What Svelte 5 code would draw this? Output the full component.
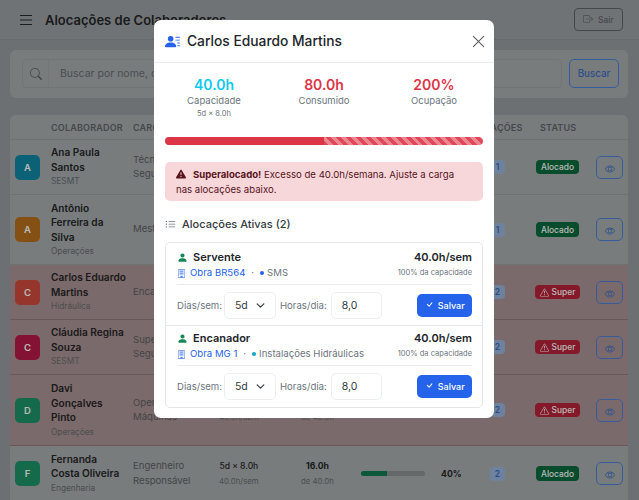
<script>
  const rows = [
    { initial: 'A', color: '#1088a5', name: 'Ana Paula\nSantos', dept: 'SESMT', cargo: 'Técnico de Segurança', used: '40.0h', pct: 100, alloc: 1, over: false, h: 55 },
    { initial: 'A', color: '#b8701c', name: 'Antônio\nFerreira da\nSilva', dept: 'Operações', cargo: 'Mestre de Obras', used: '40.0h', pct: 100, alloc: 1, over: false, h: 70 },
    { initial: 'C', color: '#d04a3c', name: 'Carlos Eduardo\nMartins', dept: 'Hidráulica', cargo: 'Encanador', used: '80.0h', pct: 200, alloc: 2, over: true, h: 55 },
    { initial: 'C', color: '#b81a48', name: 'Cláudia Regina\nSouza', dept: 'SESMT', cargo: 'Supervisor de Segurança', used: '60.0h', pct: 150, alloc: 2, over: true, h: 55 },
    { initial: 'D', color: '#1e9468', name: 'Davi\nGonçalves\nPinto', dept: 'Operações', cargo: 'Operador de Máquinas', used: '60.0h', pct: 150, alloc: 2, over: true, h: 71 },
    { initial: 'F', color: '#1e9468', name: 'Fernanda\nCosta Oliveira', dept: 'Engenharia', cargo: 'Engenheiro Responsável', used: '16.0h', pct: 40, alloc: 2, over: false, h: 56 }
  ];

  const allocations = [
    { role: 'Servente', obra: 'Obra BR564', sector: 'SMS', dot: '#2563eb' },
    { role: 'Encanador', obra: 'Obra MG 1', sector: 'Instalações Hidráulicas', dot: '#0ea5c6' }
  ];

  const icons = {
    list: 'M2.5 12a.5.5 0 0 1 .5-.5h10a.5.5 0 0 1 0 1H3a.5.5 0 0 1-.5-.5m0-4a.5.5 0 0 1 .5-.5h10a.5.5 0 0 1 0 1H3a.5.5 0 0 1-.5-.5m0-4a.5.5 0 0 1 .5-.5h10a.5.5 0 0 1 0 1H3a.5.5 0 0 1-.5-.5',
    exit: 'M10 12.5a.5.5 0 0 1-.5.5h-8a.5.5 0 0 1-.5-.5v-9a.5.5 0 0 1 .5-.5h8a.5.5 0 0 1 .5.5v2a.5.5 0 0 0 1 0v-2A1.5 1.5 0 0 0 9.5 2h-8A1.5 1.5 0 0 0 0 3.5v9A1.5 1.5 0 0 0 1.5 14h8a1.5 1.5 0 0 0 1.5-1.5v-2a.5.5 0 0 0-1 0zM15.854 8.354a.5.5 0 0 0 0-.708l-3-3a.5.5 0 0 0-.708.708L14.293 7.5H5.5a.5.5 0 0 0 0 1h8.793l-2.147 2.146a.5.5 0 0 0 .708.708z',
    search: 'M11.742 10.344a6.5 6.5 0 1 0-1.397 1.398h-.001q.044.06.098.115l3.85 3.85a1 1 0 0 0 1.415-1.414l-3.85-3.85a1 1 0 0 0-.115-.1zM12 6.5a5.5 5.5 0 1 1-11 0 5.5 5.5 0 0 1 11 0',
    eye: 'M16 8s-3-5.5-8-5.5S0 8 0 8s3 5.5 8 5.5S16 8 16 8M1.173 8a13 13 0 0 1 1.66-2.043C4.12 4.668 5.88 3.5 8 3.5s3.879 1.168 5.168 2.457A13 13 0 0 1 14.828 8q-.086.13-.195.288c-.335.48-.83 1.12-1.465 1.755C11.879 11.332 10.119 12.5 8 12.5s-3.879-1.168-5.168-2.457A13 13 0 0 1 1.172 8zM8 5.5a2.5 2.5 0 1 0 0 5 2.5 2.5 0 0 0 0-5M4.5 8a3.5 3.5 0 1 1 7 0 3.5 3.5 0 0 1-7 0',
    warn: 'M7.938 2.016A.13.13 0 0 1 8.002 2a.13.13 0 0 1 .063.016.15.15 0 0 1 .054.057l6.857 11.667c.036.06.035.124.002.183a.2.2 0 0 1-.054.06.1.1 0 0 1-.066.017H1.146a.1.1 0 0 1-.066-.017.2.2 0 0 1-.054-.06.18.18 0 0 1 .002-.183L7.884 2.073a.15.15 0 0 1 .054-.057m1.044-.45a1.13 1.13 0 0 0-1.96 0L.165 13.233c-.457.778.091 1.767.98 1.767h13.713c.889 0 1.438-.99.98-1.767zM7.002 12a1 1 0 1 1 2 0 1 1 0 0 1-2 0M7.1 5.995a.905.905 0 1 1 1.8 0l-.35 3.507a.552.552 0 0 1-1.1 0z',
    warnFill: 'M8.982 1.566a1.13 1.13 0 0 0-1.96 0L.165 13.233c-.457.778.091 1.767.98 1.767h13.713c.889 0 1.438-.99.98-1.767zM8 5c.535 0 .954.462.9.995l-.35 3.507a.552.552 0 0 1-1.1 0L7.1 5.995A.905.905 0 0 1 8 5m.002 6a1 1 0 1 1 0 2 1 1 0 0 1 0-2',
    personLines: 'M6 8a3 3 0 1 0 0-6 3 3 0 0 0 0 6m-5 6s-1 0-1-1 1-4 6-4 6 3 6 4-1 1-1 1zM11 3.5a.5.5 0 0 1 .5-.5h4a.5.5 0 0 1 0 1h-4a.5.5 0 0 1-.5-.5m.5 2.5a.5.5 0 0 0 0 1h4a.5.5 0 0 0 0-1zm2 3a.5.5 0 0 0 0 1h2a.5.5 0 0 0 0-1zm0 3a.5.5 0 0 0 0 1h2a.5.5 0 0 0 0-1z',
    close: 'M2.146 2.854a.5.5 0 1 1 .708-.708L8 7.293l5.146-5.147a.5.5 0 0 1 .708.708L8.707 8l5.147 5.146a.5.5 0 0 1-.708.708L8 8.707l-5.146 5.147a.5.5 0 0 1-.708-.708L7.293 8z',
    listUl: 'M5 11.5a.5.5 0 0 1 .5-.5h9a.5.5 0 0 1 0 1h-9a.5.5 0 0 1-.5-.5m0-4a.5.5 0 0 1 .5-.5h9a.5.5 0 0 1 0 1h-9a.5.5 0 0 1-.5-.5m0-4a.5.5 0 0 1 .5-.5h9a.5.5 0 0 1 0 1h-9a.5.5 0 0 1-.5-.5m-3 1a1 1 0 1 0 0-2 1 1 0 0 0 0 2m0 4a1 1 0 1 0 0-2 1 1 0 0 0 0 2m0 4a1 1 0 1 0 0-2 1 1 0 0 0 0 2',
    person: 'M3 14s-1 0-1-1 1-4 6-4 6 3 6 4-1 1-1 1zm5-6a3 3 0 1 0 0-6 3 3 0 0 0 0 6',
    building: 'M3 0h10a1 1 0 0 1 1 1v14a1 1 0 0 1-1 1H3a1 1 0 0 1-1-1V1a1 1 0 0 1 1-1m0 1.300v13.400h3V12h4v2.700h3V1.300zm1.500 1.500h7v2h-7zm0 3.500h7v2h-7zm0 3h7v.8h-7z',
    check: 'M10.97 4.97a.75.75 0 0 1 1.07 1.05l-3.99 4.99a.75.75 0 0 1-1.08.02L4.324 8.384a.75.75 0 1 1 1.06-1.06l2.094 2.093 3.473-4.425z'
  };
</script>

{#snippet icon(d, size)}
  <svg class="icon" width={size} height={size} viewBox="0 0 16 16" fill="currentColor" aria-hidden="true"><path {d} /></svg>
{/snippet}

<div class="page">
  <header class="topbar">
    <span class="burger">{@render icon(icons.list, 18)}</span>
    <h1>Alocações de Colaboradores</h1>
    <button class="logout">{@render icon(icons.exit, 10)}&nbsp; Sair</button>
  </header>

  <section class="search">
    <div class="search-box">
      <span class="search-icon">{@render icon(icons.search, 12)}</span>
      <span class="placeholder">Buscar por nome, cargo ou departamento...</span>
    </div>
    <button class="search-btn">Buscar</button>
  </section>

  <section class="table">
    <div class="row head">
      <span></span>
      <span>COLABORADOR</span>
      <span>CARGO</span>
      <span>JORNADA</span>
      <span>CONSUMO</span>
      <span>OCUPAÇÃO</span>
      <span class="alloc-head">ALOCAÇÕES</span>
      <span class="status-head">STATUS</span>
      <span></span>
    </div>
    {#each rows as r}
      <div class="row" class:over={r.over} style="height:{r.h}px">
        <span class="avatar" style="background:{r.color}">{r.initial}</span>
        <div class="who">
          <div class="name">{r.name}</div>
          <div class="dept">{r.dept}</div>
        </div>
        <div class="cargo">{r.cargo}</div>
        <div class="center">
          <div class="strong-sm">5d × 8.0h</div>
          <div class="sub">40.0h/sem</div>
        </div>
        <div class="center">
          <div class="strong">{r.used}</div>
          <div class="sub">de 40.0h</div>
        </div>
        <div class="occ">
          <div class="track"><div class="fill" class:red={r.over} style="width:{Math.min(r.pct, 100)}%"></div></div>
          <span class="strong">{r.pct}%</span>
        </div>
        <div><span class="count">{r.alloc}</span></div>
        <div>
          {#if r.over}
            <span class="status super">{@render icon(icons.warn, 9)} Super</span>
          {:else}
            <span class="status ok">Alocado</span>
          {/if}
        </div>
        <button class="eye">{@render icon(icons.eye, 10)}</button>
      </div>
    {/each}
  </section>
</div>

<div class="backdrop"></div>

<div class="modal">
  <div class="modal-head">
    <span class="head-icon">{@render icon(icons.personLines, 15)}</span>
    <h2>Carlos Eduardo Martins</h2>
    <span class="close">{@render icon(icons.close, 15)}</span>
  </div>

  <div class="modal-body">
    <div class="stats">
      <div>
        <div class="value cyan">40.0h</div>
        <div class="label">Capacidade</div>
        <div class="hint">5d × 8.0h</div>
      </div>
      <div>
        <div class="value danger">80.0h</div>
        <div class="label">Consumido</div>
      </div>
      <div>
        <div class="value danger">200%</div>
        <div class="label">Ocupação</div>
      </div>
    </div>

    <div class="bar"><div class="bar-solid"></div><div class="bar-striped"></div></div>

    <div class="alert">
      <span class="alert-icon">{@render icon(icons.warnFill, 10)}</span><b>Superalocado!</b> Excesso de 40.0h/semana. Ajuste a carga nas alocações abaixo.
    </div>

    <div class="section-title">
      <span class="section-icon">{@render icon(icons.listUl, 11)}</span>
      Alocações Ativas (2)
    </div>

    <div class="alloc-list">
      {#each allocations as a}
        <div class="item">
          <div class="item-top">
            <div>
              <div class="role"><span class="role-icon">{@render icon(icons.person, 11)}</span>{a.role}</div>
              <div class="where">
                <span class="obra-icon">{@render icon(icons.building, 9)}</span>
                <span class="obra">{a.obra}</span>
                <span class="sep">·</span>
                <span class="dot" style="background:{a.dot}"></span>
                <span>{a.sector}</span>
              </div>
            </div>
            <div class="hours">
              <div class="hours-main">40.0h/sem</div>
              <div class="hours-sub">100% da capacidade</div>
            </div>
          </div>
          <div class="controls">
            <span class="ctl-label">Dias/sem:</span>
            <div class="select">
              <span>5d</span>
              <svg width="9" height="9" viewBox="0 0 16 16" fill="none" stroke="#343a40" stroke-width="2" stroke-linecap="round" stroke-linejoin="round"><path d="m2 5 6 6 6-6" /></svg>
            </div>
            <span class="ctl-label">Horas/dia:</span>
            <div class="input">8,0</div>
            <button class="save">{@render icon(icons.check, 11)} Salvar</button>
          </div>
        </div>
      {/each}
    </div>
  </div>
</div>

<style>
  :global(body) {
    margin: 0;
    background: #979ca0;
    overflow: hidden;
  }
  .icon {
    display: inline-block;
    vertical-align: -0.12em;
    flex: none;
  }
  button {
    font-family: inherit;
    background: none;
    padding: 0;
    cursor: pointer;
  }
  .page {
    width: 639px;
    height: 500px;
    overflow: hidden;
    font-family: Inter, "Liberation Sans", sans-serif;
    font-size: 9.6px;
    color: #262626;
  }
  .topbar {
    height: 40px;
    box-sizing: border-box;
    display: flex;
    align-items: center;
    padding: 0 16px 0 17px;
    background: #9ba0a4;
    border-bottom: 1px solid #8d9295;
  }
  .burger {
    display: flex;
    margin-right: 10px;
  }
  h1 {
    flex: 1;
    margin: 0;
    font-size: 13px;
    font-weight: 600;
  }
  .logout {
    width: 49px;
    height: 23px;
    border: 1px solid #5f6568;
    border-radius: 4px;
    color: #5f6568;
    font-size: 8.5px;
    font-weight: 500;
  }
  .search {
    margin: 10px 11px 0 10px;
    height: 48px;
    box-sizing: border-box;
    padding: 9px 9px 10px 12px;
    display: flex;
    gap: 7px;
    background: #a8acae;
    border-radius: 6px;
  }
  .search-box {
    flex: 1;
    display: flex;
    align-items: center;
    border: 1px solid #9da1a3;
    border-radius: 4px;
    overflow: hidden;
  }
  .search-icon {
    width: 25px;
    height: 100%;
    display: flex;
    align-items: center;
    justify-content: center;
    border-right: 1px solid #a1a5a7;
    color: #5f6568;
  }
  .placeholder {
    margin-left: 11px;
    color: #676d70;
    font-size: 10.5px;
  }
  .search-btn {
    width: 50px;
    border: 1px solid #4d80da;
    border-radius: 5px;
    color: #3a6dc0;
    font-size: 9.8px;
    font-weight: 500;
  }
  .table {
    margin: 17px 11px 0 10px;
    background: #a8acae;
    border-radius: 6px 6px 0 0;
  }
  .row {
    display: grid;
    grid-template-columns: 41px 82px 86px 82px 60px 129px 46px 60px 32px;
    align-items: center;
    box-sizing: border-box;
    border-bottom: 1px solid #9a9ea0;
  }
  .row > :first-child {
    margin-left: 5px;
  }
  .head {
    height: 25px;
    font-size: 9px;
    font-weight: 600;
    letter-spacing: 0.2px;
    color: #5f6568;
  }
  .over {
    background: #ab9395;
    border-bottom-color: #917b7c;
  }
  .alloc-head {
    margin-left: -25px;
  }
  .status-head {
    margin-left: 4px;
  }
  .avatar {
    width: 25px;
    height: 25px;
    border-radius: 5px;
    display: flex;
    align-items: center;
    justify-content: center;
    color: #fff;
    font-size: 9.5px;
    font-weight: 600;
  }
  .name {
    white-space: pre-line;
    font-weight: 600;
    line-height: 14.5px;
    font-size: 10.1px;
  }
  .dept {
    font-size: 8.3px;
    line-height: 14.5px;
    color: #676d6d;
  }
  .cargo {
    line-height: 14.5px;
    color: #5b6162;
    padding-right: 8px;
  }
  .center {
    text-align: center;
    justify-self: start;
    line-height: 14.5px;
  }
  .strong-sm {
    font-size: 8.5px;
    font-weight: 500;
  }
  .sub {
    font-size: 7.8px;
    color: #676d6d;
  }
  .strong {
    font-size: 8.7px;
    font-weight: 700;
  }
  .occ {
    display: flex;
    align-items: center;
    gap: 16px;
  }
  .track {
    width: 64px;
    height: 5px;
    border-radius: 3px;
    background: #8d9090;
    overflow: hidden;
  }
  .fill {
    height: 100%;
    background: #137a53;
  }
  .fill.red {
    background: #b8243a;
  }
  .count {
    display: inline-block;
    width: 15px;
    height: 14px;
    line-height: 14px;
    text-align: center;
    border-radius: 4px;
    background: #9ab4da;
    color: #3a6dc0;
    font-size: 8.5px;
    font-weight: 600;
  }
  .status {
    display: inline-flex;
    align-items: center;
    justify-content: center;
    gap: 3px;
    height: 14.5px;
    border-radius: 4px;
    color: #fff;
    font-size: 8.4px;
    font-weight: 500;
  }
  .ok {
    width: 43px;
    background: #0b6a3d;
  }
  .super {
    width: 45px;
    margin-left: -1px;
    background: #b8243a;
  }
  .eye {
    width: 27px;
    height: 23px;
    border: 1px solid #4d80da;
    border-radius: 5px;
    color: #3a6dc0;
  }
  .backdrop {
    position: fixed;
    inset: 0;
    background: rgba(0, 0, 0, 0.28);
  }
  .modal {
    position: fixed;
    left: 154px;
    top: 20px;
    width: 340px;
    height: 398px;
    box-sizing: border-box;
    background: #fff;
    border-radius: 7px;
    font-family: Inter, "Liberation Sans", sans-serif;
    color: #212529;
    font-size: 10.5px;
    overflow: hidden;
  }
  .modal-head {
    height: 43px;
    box-sizing: border-box;
    display: flex;
    align-items: center;
    padding: 0 8px 0 11px;
    gap: 7px;
    border-bottom: 1px solid #e9ecef;
  }
  .head-icon {
    display: flex;
    color: #2563eb;
  }
  h2 {
    flex: 1;
    margin: 0;
    font-size: 13.8px;
    font-weight: 500;
  }
  .close {
    display: flex;
    color: #555;
  }
  .modal-body {
    padding: 0 11px;
  }
  .stats {
    height: 74px;
    box-sizing: border-box;
    margin: 0 -6px;
    padding-top: 13px;
    display: grid;
    grid-template-columns: repeat(3, 1fr);
    text-align: center;
  }
  .value {
    font-size: 14px;
    font-weight: 600;
    line-height: 17px;
  }
  .cyan {
    color: #0dcaf0;
  }
  .danger {
    color: #dc3545;
  }
  .label {
    margin-top: 1px;
    color: #6c757d;
    font-size: 9.5px;
    line-height: 14px;
  }
  .hint {
    color: #6c757d;
    font-size: 7.5px;
    line-height: 11px;
  }
  .bar {
    display: flex;
    height: 8px;
    border-radius: 4px;
    overflow: hidden;
  }
  .bar-solid {
    width: 50%;
    background: #dc3545;
  }
  .bar-striped {
    width: 50%;
    background: repeating-linear-gradient(45deg, #e0485a 0 3.5px, #ec8792 3.5px 7px);
  }
  .alert {
    margin-top: 17px;
    height: 39px;
    box-sizing: border-box;
    padding: 5px 11px;
    background: #f8d7da;
    border-radius: 5px;
    color: #58151c;
    font-size: 9.6px;
    line-height: 15px;
  }
  .alert b {
    font-weight: 700;
  }
  .alert-icon {
    margin-right: 7px;
  }
  .section-title {
    margin-top: 15px;
    display: flex;
    align-items: center;
    gap: 6px;
    height: 16px;
    font-size: 11px;
    font-weight: 500;
    color: #343a40;
  }
  .section-icon {
    display: flex;
    color: #6c757d;
  }
  .alloc-list {
    margin-top: 10px;
    border: 1px solid #e2e6ea;
    border-radius: 5px;
  }
  .item {
    height: 82px;
    box-sizing: border-box;
    padding: 7px 10px 0 11px;
  }
  .item + .item {
    border-top: 1px solid #e2e6ea;
    padding-top: 5px;
  }
  .item-top {
    display: flex;
    justify-content: space-between;
    height: 34px;
    border-bottom: 1px solid #e9ecef;
  }
  .role {
    display: flex;
    align-items: center;
    gap: 5px;
    font-size: 11px;
    font-weight: 600;
    line-height: 15px;
  }
  .role-icon {
    display: flex;
    color: #198754;
  }
  .where {
    display: flex;
    align-items: center;
    gap: 4px;
    margin-top: 1px;
    color: #6c757d;
    font-size: 9.6px;
    line-height: 14px;
  }
  .obra {
    color: #2563eb;
  }
  .obra-icon {
    display: flex;
    color: #5d8bf0;
  }
  .sep {
    margin: 0 2px;
  }
  .dot {
    width: 4px;
    height: 4px;
    border-radius: 50%;
    margin-right: -1px;
  }
  .hours {
    text-align: right;
  }
  .hours-main {
    font-size: 11px;
    font-weight: 600;
    line-height: 15px;
  }
  .hours-sub {
    margin-top: 1px;
    font-size: 7.5px;
    line-height: 13px;
    color: #6c757d;
  }
  .controls {
    display: flex;
    align-items: center;
    height: 40px;
    gap: 4px;
  }
  .ctl-label {
    color: #6c757d;
    font-size: 9.6px;
  }
  .select,
  .input {
    height: 27px;
    box-sizing: border-box;
    display: flex;
    align-items: center;
    border: 1px solid #eceff2;
    border-radius: 5px;
    font-size: 10.5px;
    color: #343a40;
  }
  .select {
    width: 52px;
    padding: 0 10px;
    justify-content: space-between;
    margin-left: -2px;
  }
  .input {
    width: 51px;
    padding-left: 10px;
  }
  .save {
    margin-left: auto;
    width: 55px;
    height: 23px;
    border: none;
    border-radius: 5px;
    background: #2563eb;
    color: #fff;
    font-size: 9px;
    font-weight: 500;
  }
</style>
